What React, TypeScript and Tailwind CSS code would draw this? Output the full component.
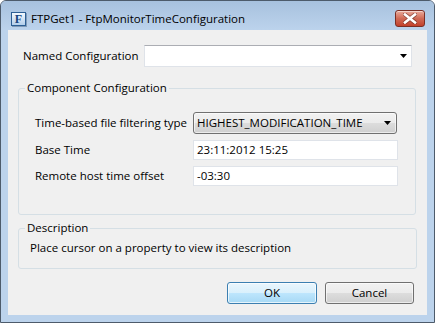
import React from 'react';

function DropArrow() {
  return (
    <svg width="7" height="4" viewBox="0 0 7 4">
      <path d="M0 0h7L3.5 4z" fill="#000" />
    </svg>
  );
}

function CloseGlyph() {
  return (
    <svg width="14" height="11" viewBox="0 0 14 11">
      <path d="M2 1.5l10 8M12 1.5l-10 8" stroke="#5a2018" strokeWidth="4.2" strokeLinecap="square" opacity="0.55" />
      <path d="M2 1.5l10 8M12 1.5l-10 8" stroke="#fff" strokeWidth="2.6" strokeLinecap="square" />
    </svg>
  );
}

export default function App() {
  return (
    <div className="w-[435px] h-[323px] bg-white">
      <div className="flex h-full w-full flex-col rounded-t-[6px] border border-[#4d5b6b] bg-[#bcd3ec] font-['Open_Sans',sans-serif] text-[11.5px] text-black">
        {/* Title bar */}
        <div className="flex h-[29px] items-start rounded-t-[5px] bg-gradient-to-b from-[#a7c1de] to-[#bcd3ec] pl-[10px] pr-[9px] pt-[9px]">
          <div className="mt-[2px] flex h-[14px] w-[15px] items-center justify-center border border-[#2d5f94] bg-gradient-to-b from-[#f4f9fe] to-[#b3cfeb] shadow-[1px_1px_0_#7f9ab8]">
            <span className="font-['Liberation_Serif',serif] text-[12px] font-bold leading-none text-[#17467d]">F</span>
          </div>
          <div className="ml-[5px] mt-[1px] leading-[16px] text-[#000]">FTPGet1 - FtpMonitorTimeConfiguration</div>
          <div className="flex-1" />
          <button className="flex h-[17px] w-[30px] items-center justify-center rounded-[3px] border border-[#7b2f25] bg-gradient-to-b from-[#e9aa9b] via-[#d06a56] to-[#c2402b] shadow-[inset_0_1px_0_rgba(255,255,255,0.5)]">
            <CloseGlyph />
          </button>
        </div>

        {/* Client area */}
        <div className="mx-[7px] flex h-[285px] flex-col bg-[#f0f0f0]">
          {/* Named configuration */}
          <div className="mt-[15px] flex items-center pl-[15px] pr-[15px]">
            <div className="w-[121px] leading-[16px]">Named Configuration</div>
            <div className="flex h-[22px] flex-1 items-center justify-end border border-[#dfe3e9] border-t-[#abadb3] bg-white pr-[4px]">
              <DropArrow />
            </div>
          </div>

          {/* Component configuration */}
          <fieldset className="ml-[10px] mr-[11px] mt-[13px] rounded-[3px] border border-[#d5dfe5]">
            <legend className="ml-[6px] px-[2px] leading-[16px]">Component Configuration</legend>
            <div className="grid grid-cols-[158px_1fr] items-center gap-y-[6px] pb-[28px] pl-[16px] pr-[17px] pt-[16px]">
              <div className="leading-[16px]">Time-based file filtering type</div>
              <div className="mr-[1px] flex h-[22px] items-center justify-between rounded-[3px] border border-[#707070] bg-[linear-gradient(#f2f2f2_0%,#ebebeb_50%,#dddddd_50%,#cfcfcf_100%)] pl-[3px] pr-[5px] shadow-[inset_0_0_0_1px_rgba(255,255,255,0.6)]">
                <span className="leading-[16px]">HIGHEST_MODIFICATION_TIME</span>
                <DropArrow />
              </div>

              <div className="leading-[16px]">Base Time</div>
              <div className="flex h-[20px] items-center border border-[#dfe3e9] bg-white pl-[3px] leading-[16px]">
                23:11:2012 15:25
              </div>

              <div className="leading-[16px]">Remote host time offset</div>
              <div className="flex h-[20px] items-center border border-[#dfe3e9] bg-white pl-[3px] leading-[16px]">
                -03:30
              </div>
            </div>
          </fieldset>

          {/* Description */}
          <fieldset className="ml-[10px] mr-[10px] mt-[5px] rounded-[3px] border border-[#d5dfe5]">
            <legend className="ml-[6px] px-[2px] leading-[16px]">Description</legend>
            <div className="pb-[12px] pl-[11px] pt-[4px] leading-[16px]">
              Place cursor on a property to view its description
            </div>
          </fieldset>

          {/* Buttons */}
          <div className="mt-[13px] flex justify-end gap-[8px] pr-[13px]">
            <button className="h-[22px] w-[90px] rounded-[3px] border border-[#3c7fb1] bg-[linear-gradient(#eaf6fd_0%,#d9f0fc_50%,#bee6fd_50%,#a7d9f5_100%)] leading-[16px] shadow-[inset_0_0_0_1px_rgba(255,255,255,0.7)]">
              OK
            </button>
            <button className="h-[22px] w-[89px] rounded-[3px] border border-[#707070] bg-[linear-gradient(#f2f2f2_0%,#ebebeb_50%,#dddddd_50%,#cfcfcf_100%)] leading-[16px] shadow-[inset_0_0_0_1px_rgba(255,255,255,0.6)]">
              Cancel
            </button>
          </div>
        </div>
      </div>
    </div>
  );
}
